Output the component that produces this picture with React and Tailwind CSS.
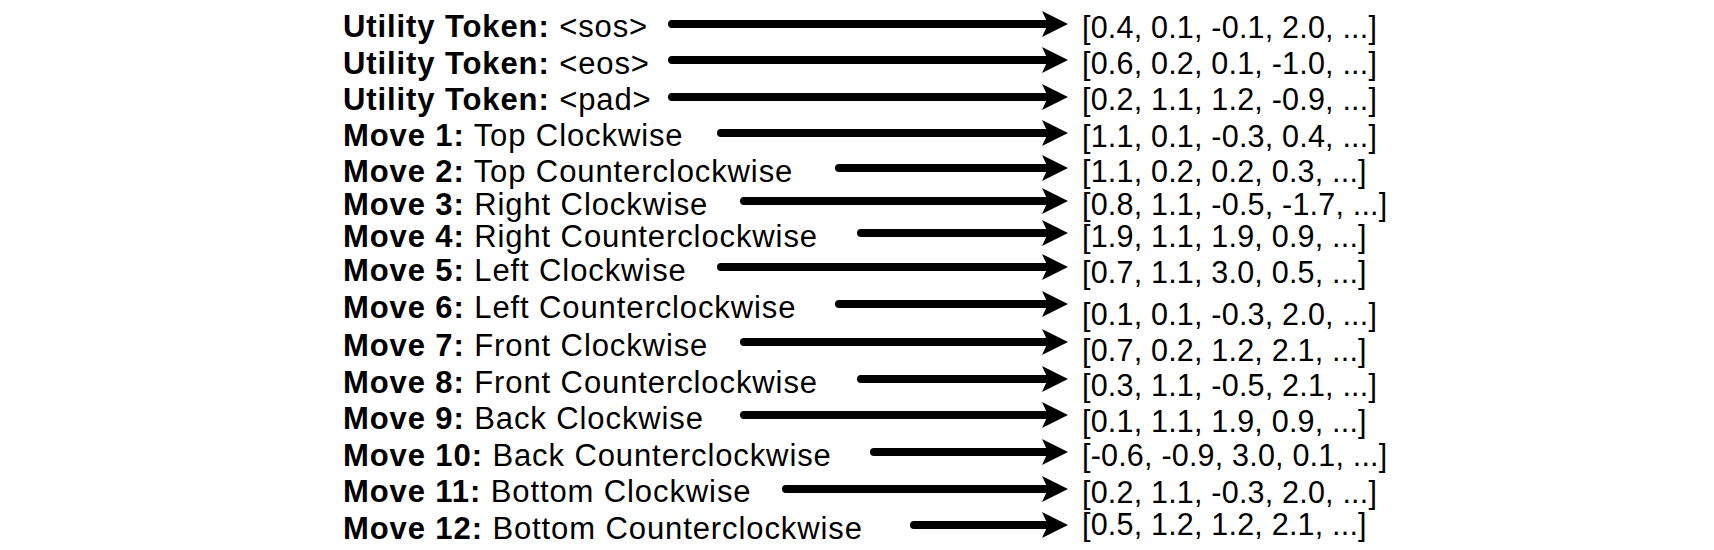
import React from "react";

// token -> embedding rows, heights and arrow widths read off the figure
const rows = [
  { tag: "Utility Token:", name: "<sos>", vec: "[0.4, 0.1, -0.1, 2.0, ...]", h: "h-[36.5px]", w: 400, vy: "" },
  { tag: "Utility Token:", name: "<eos>", vec: "[0.6, 0.2, 0.1, -1.0, ...]", h: "h-[36.5px]", w: 400, vy: "" },
  { tag: "Utility Token:", name: "<pad>", vec: "[0.2, 1.1, 1.2, -0.9, ...]", h: "h-[36px]", w: 400, vy: "" },
  { tag: "Move 1:", name: "Top Clockwise", vec: "[1.1, 0.1, -0.3, 0.4, ...]", h: "h-[36.5px]", w: 351, vy: "" },
  { tag: "Move 2:", name: "Top Counterclockwise", vec: "[1.1, 0.2, 0.2, 0.3, ...]", h: "h-[34px]", w: 233, vy: "" },
  { tag: "Move 3:", name: "Right Clockwise", vec: "[0.8, 1.1, -0.5, -1.7, ...]", h: "h-[32px]", w: 328, vy: "" },
  { tag: "Move 4:", name: "Right Counterclockwise", vec: "[1.9, 1.1, 1.9, 0.9, ...]", h: "h-[32.5px]", w: 211, vy: "" },
  { tag: "Move 5:", name: "Left Clockwise", vec: "[0.7, 1.1, 3.0, 0.5, ...]", h: "h-[35.5px]", w: 351, vy: "mt-[4px]" },
  { tag: "Move 6:", name: "Left Counterclockwise", vec: "[0.1, 0.1, -0.3, 2.0, ...]", h: "h-[38.5px]", w: 233, vy: "mt-[13px]" },
  { tag: "Move 7:", name: "Front Clockwise", vec: "[0.7, 0.2, 1.2, 2.1, ...]", h: "h-[37.5px]", w: 328, vy: "mt-[10px]" },
  { tag: "Move 8:", name: "Front Counterclockwise", vec: "[0.3, 1.1, -0.5, 2.1, ...]", h: "h-[36px]", w: 211, vy: "mt-[7px]" },
  { tag: "Move 9:", name: "Back Clockwise", vec: "[0.1, 1.1, 1.9, 0.9, ...]", h: "h-[36.5px]", w: 328, vy: "mt-[5px]" },
  { tag: "Move 10:", name: "Back Counterclockwise", vec: "[-0.6, -0.9, 3.0, 0.1, ...]", h: "h-[37px]", w: 198, vy: "" },
  { tag: "Move 11:", name: "Bottom Clockwise", vec: "[0.2, 1.1, -0.3, 2.0, ...]", h: "h-[36.5px]", w: 286, vy: "" },
  { tag: "Move 12:", name: "Bottom Counterclockwise", vec: "[0.5, 1.2, 1.2, 2.1, ...]", h: "h-[36px]", w: 158, vy: "mb-[8px]" },
];

function Arrow({ width }) {
  return (
    <svg width={width} height="26" viewBox={`0 0 ${width} 26`} className="shrink-0 mb-[6px]">
      <line x1="4" y1="13" x2={width - 20} y2="13" stroke="black" strokeWidth="8" strokeLinecap="round" />
      <polygon points={`${width - 26},0 ${width},13 ${width - 26},26 ${width - 20},13`} fill="black" />
    </svg>
  );
}

export default function App() {
  return (
    <div className="w-[1714px] h-[550px] bg-white text-black overflow-hidden font-['Liberation_Sans',Arial,sans-serif]">
      <div className="flex flex-col pt-[8.5px] pl-[343px]">
        {rows.map((r, i) => (
          <div key={i} className={`flex items-center ${r.h}`}>
            <div className="flex items-center w-[725px]">
              <span className="flex-1 whitespace-nowrap text-[31px] leading-none tracking-[0.9px]">
                <b>{r.tag}</b> {r.name}
              </span>
              <Arrow width={r.w} />
            </div>
            <span className={`ml-[14px] whitespace-nowrap text-[30.5px] leading-none tracking-[0.2px] ${r.vy}`}>{r.vec}</span>
          </div>
        ))}
      </div>
    </div>
  );
}
